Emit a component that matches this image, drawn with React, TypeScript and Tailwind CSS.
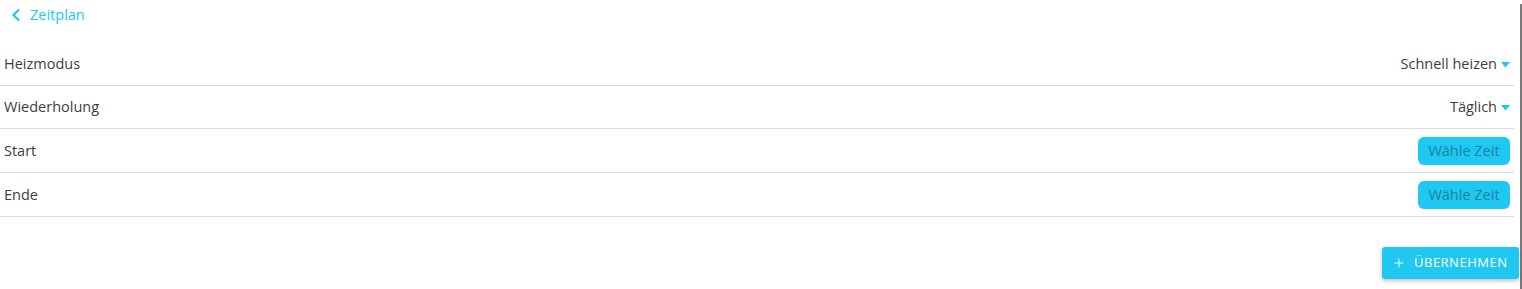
import { ChevronLeft, Plus } from 'lucide-react';

const cyan = 'bg-[#1ec8f0]';

function Caret() {
  return (
    <svg width="9" height="6" viewBox="0 0 9 6" className="ml-[4px] mt-[1px]">
      <path d="M0 0 H9 L4.5 5.5 Z" fill="#1ec8f0" />
    </svg>
  );
}

function Row({ label, h, children }: { label: string; h: string; children: React.ReactNode }) {
  return (
    <div className={`flex items-center justify-between border-b border-[#dcdcdc] pl-[4px] pr-[4px] ${h}`}>
      <span className="text-[14.5px] text-[#3d3d3d]">{label}</span>
      <div className="flex items-center">{children}</div>
    </div>
  );
}

export default function App() {
  return (
    <div className="w-[1522px] h-[289px] bg-white overflow-hidden" style={{ fontFamily: '"Open Sans", sans-serif' }}>
      <div className="mt-[4px] h-[285px] border-r-2 border-[#7a7a7a] flex flex-col">
        {/* Back link */}
        <div className="h-[39px] pl-[7px] pt-[1px]">
          <button className="flex items-center text-[14.5px] leading-[20px] text-[#1ec8f0]">
            <ChevronLeft size={20} strokeWidth={2.6} className="mr-[4px] -ml-[1px]" />
            Zeitplan
          </button>
        </div>

        {/* Settings */}
        <div className="mr-[6px]">
          <Row label="Heizmodus" h="h-[43px]">
            <span className="text-[14.5px] text-[#3d3d3d]">Schnell heizen</span>
            <Caret />
          </Row>
          <Row label="Wiederholung" h="h-[43px]">
            <span className="text-[14.5px] text-[#3d3d3d]">Täglich</span>
            <Caret />
          </Row>
          <Row label="Start" h="h-[44px]">
            <button className={`${cyan} h-[28px] w-[92px] rounded-[6px] text-[14.5px] text-[#1a84a3]`}>Wähle Zeit</button>
          </Row>
          <Row label="Ende" h="h-[44px]">
            <button className={`${cyan} h-[28px] w-[92px] rounded-[6px] text-[14.5px] text-[#1a84a3]`}>Wähle Zeit</button>
          </Row>
        </div>

        {/* Apply */}
        <div className="flex justify-end pt-[30px] pr-[1px]">
          <button className={`${cyan} flex items-center h-[32px] w-[137px] pl-[10px] rounded-[3px] shadow-[0_2px_4px_rgba(0,0,0,0.25)] text-white text-[13px] tracking-[0.5px]`}>
            <Plus size={14} strokeWidth={1.6} className="mr-[8px]" />
            ÜBERNEHMEN
          </button>
        </div>
      </div>
    </div>
  );
}
